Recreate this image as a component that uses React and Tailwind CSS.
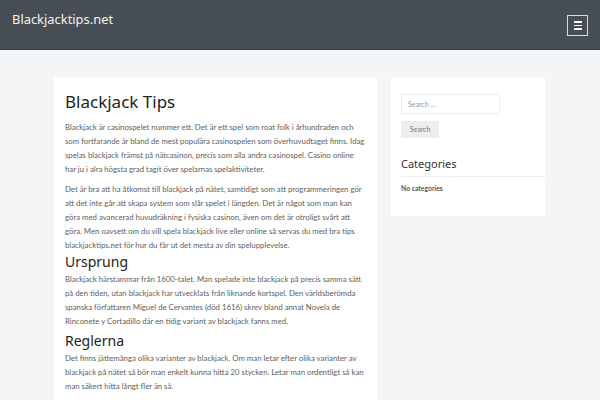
export default function App() {
  const body = "text-[7.79px] leading-[14px] text-[#5e5e5e]";
  const bodyFont = { fontFamily: 'Lato, "Open Sans", sans-serif' };
  return (
    <div className="w-[600px] h-[400px] overflow-hidden bg-[#f4f5f6]" style={{ fontFamily: '"Noto Sans", "Open Sans", sans-serif' }}>
      <header className="h-[50px] bg-[#474d55] border-b border-[#3a3f45] flex items-start justify-between pl-[12px] pr-[12px]">
        <div className="text-[12.9px] text-[#f2f2f2] mt-[10px] leading-[18px]">Blackjacktips.net</div>
        <div className="mt-[15px] w-[21px] h-[21px] border border-[#d9dadc] flex flex-col items-center justify-center gap-[2px]">
          <span className="block w-[8px] h-[1.5px] bg-white" />
          <span className="block w-[8px] h-[1.5px] bg-white" />
          <span className="block w-[8px] h-[1.5px] bg-white" />
        </div>
      </header>
      <div className="flex gap-[14px] pl-[54px] pt-[27px]">
        <main className="w-[323px] h-[400px] bg-white px-[11px] pt-[13px]">
          <h1 className="text-[17px] leading-[24px] text-[#222]">Blackjack Tips</h1>
          <div className="mt-[6px]" style={bodyFont}>
            <p className={body}>Blackjack är casinospelet nummer ett. Det är ett spel som roat folk i århundraden och som fortfarande är bland de mest populära casinospelen som överhuvudtaget finns. Idag spelas blackjack främst på nätcasinon, precis som alla andra casinospel. Casino online har ju i alra högsta grad tagit över spelarnas spelaktiviteter.</p>
            <p className={body + " mt-[6px]"}>Det är bra att ha åtkomst till blackjack på nätet, samtidigt som att programmeringen gör att det inte går att skapa system som slår spelet i längden. Det är något som man kan göra med avancerad huvudräkning i fysiska casinon, även om det är otroligt svårt att göra. Men oavsett om du vill spela blackjack live eller online så servas du med bra tips blackjacktips.net för hur du får ut det mesta av din spelupplevelse.</p>
          </div>
          <h2 className="text-[14px] leading-[20px] text-[#222] mt-0">Ursprung</h2>
          <p className={body} style={bodyFont}>Blackjack härstammar från 1600-talet. Man spelade inte blackjack på precis samma sätt på den tiden, utan blackjack har utvecklats från liknande kortspel. Den världsberömda spanska författaren Miguel de Cervantes (död 1616) skrev bland annat Novela de Rinconete y Cortadillo där en tidig variant av blackjack fanns med.</p>
          <h2 className="text-[14px] leading-[20px] text-[#222] mt-[3px]">Reglerna</h2>
          <p className={body} style={bodyFont}>Det finns jättemånga olika varianter av blackjack. Om man letar efter olika varianter av blackjack på nätet så bör man enkelt kunna hitta 20 stycken. Letar man ordentligt så kan man säkert hitta långt fler än så.</p>
        </main>
        <aside className="w-[154px] h-[139px] bg-white px-[10px] pt-[17px]" style={bodyFont}>
          <div className="w-[99px] h-[20px] border border-[#ececec] rounded-[2px] flex items-center px-[6px] text-[7px] text-[#999]">Search …</div>
          <div className="mt-[7px] w-[38px] h-[17px] bg-[#eeeeee] flex items-center justify-center text-[7px] text-[#777]">Search</div>
          <div className="mt-[18px] text-[11px] leading-[16px] text-[#333]" style={{ fontFamily: '"Noto Sans", sans-serif' }}>Categories</div>
          <div className="mt-[4px] border-t border-[#eeeeee] mr-[-10px]" />
          <div className="mt-[6px] text-[6.8px] font-bold text-[#555]">No categories</div>
        </aside>
      </div>
    </div>
  );
}
